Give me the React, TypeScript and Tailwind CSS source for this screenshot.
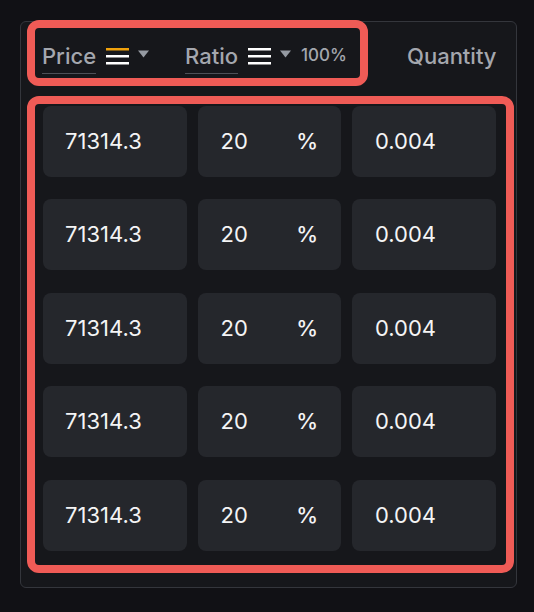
import React from 'react';

const rows = Array.from({ length: 5 }, () => ({ price: '71314.3', ratio: '20', qty: '0.004' }));

function SortIcon({ active }: { active?: boolean }) {
  return (
    <svg width="23" height="18" viewBox="0 0 23 18" className="block">
      <rect x="0" y="1" width="23" height="2.5" fill={active ? '#f0a20c' : '#ffffff'} />
      <rect x="0" y="8" width="23" height="2.5" fill="#ffffff" />
      <rect x="0" y="15" width="23" height="2.5" fill="#ffffff" />
    </svg>
  );
}

function Caret() {
  return (
    <svg width="11" height="8" viewBox="0 0 11 8" className="block">
      <path d="M0 0.5 L11 0.5 L5.5 7.5 Z" fill="#959aa2" />
    </svg>
  );
}

export default function App() {
  return (
    <div className="min-h-[612px] w-full bg-[#111115] pt-[21px] pl-[20px] font-['Inter',sans-serif]">
      <div className="w-[497px] h-[567px] rounded-[6px] border border-[#34363c] bg-[#16171b]">
        {/* Header */}
        <div className="flex items-start -mt-[2px]">
          <div className="ml-[6px] w-[341px] h-[66px] rounded-[12px] border-[8px] border-[#ef5b56] flex items-start pl-[7px]">
            <span className="mt-[16.5px] text-[22px] leading-none font-medium text-[#a4a7ae] pb-[6px] border-b border-[#4d5057]">
              Price
            </span>
            <span className="ml-[10px] mt-[19px]"><SortIcon active /></span>
            <span className="ml-[9px] mt-[22px]"><Caret /></span>
            <span className="ml-[36px] mt-[16.5px] text-[22px] leading-none font-medium text-[#a4a7ae] pb-[6px] border-b border-[#4d5057]">
              Ratio
            </span>
            <span className="ml-[10px] mt-[19px]"><SortIcon /></span>
            <span className="ml-[9px] mt-[22px]"><Caret /></span>
            <span className="ml-[10px] mt-[18.5px] text-[17px] leading-none font-medium text-[#a4a7ae]">100%</span>
          </div>
          <span className="ml-[39px] mt-[24.5px] text-[22px] leading-none font-medium text-[#a4a7ae]">Quantity</span>
        </div>

        {/* Rows */}
        <div className="mt-[10px] ml-[6px] w-[487px] h-[477px] rounded-[12px] border-[8px] border-[#ef5b56] pl-[8px] pt-[1.5px]">
          <div className="flex flex-col gap-y-[22.5px]">
            {rows.map((r, i) => (
              <div key={i} className="grid grid-cols-[143.5px_143.5px_143.5px] gap-x-[11px] text-[22px] text-[#f4f4f5]">
                <div className="h-[71px] rounded-[8px] bg-[#25272c] flex items-center pl-[22px]">{r.price}</div>
                <div className="h-[71px] rounded-[8px] bg-[#25272c] flex items-center justify-between px-[23px]">
                  <span>{r.ratio}</span>
                  <span className="font-medium">%</span>
                </div>
                <div className="h-[71px] rounded-[8px] bg-[#25272c] flex items-center pl-[23px]">{r.qty}</div>
              </div>
            ))}
          </div>
        </div>
      </div>
    </div>
  );
}
